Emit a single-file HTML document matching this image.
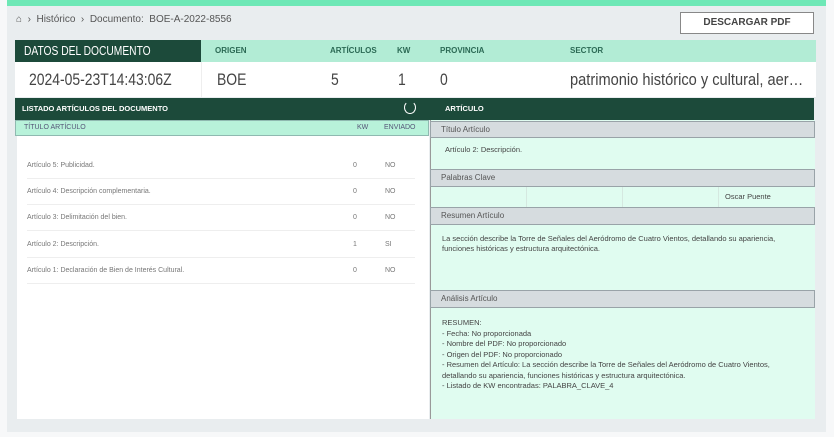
<!DOCTYPE html>
<html><head><meta charset="utf-8"><style>
*{box-sizing:border-box;margin:0;padding:0}
body{width:834px;height:437px;background:#f7f8f9;font-family:"Liberation Sans",sans-serif;position:relative;overflow:hidden;color:#555}
.a{position:absolute;white-space:nowrap}
.panel{left:7px;top:0;width:819px;height:432px;background:#e9edef}
.bar{left:7px;top:0;width:819px;height:6px;background:#6ee8b6}
.crumb{left:16px;top:14px;font-size:10px;color:#555}
.btn{left:680px;top:12px;width:134px;height:22px;background:#fff;border:1px solid #888;font-size:10px;color:#444;text-align:center;line-height:20px;font-weight:bold}
.hd{top:40px;height:22px;font-size:8px;font-weight:bold;color:#2c6a55;line-height:22px}
.dt{top:62px;height:35px;font-size:17px;color:#444;line-height:35px;transform:scaleX(0.82);transform-origin:0 50%}
.dark{background:#1c4a3a;color:#fff}
.gh{background:#d6dcdf;border:1px solid #99a3a8;font-size:8px;color:#555;line-height:15px;padding-left:10px}
.row{left:27px;width:388px;font-size:7px;color:#777;border-bottom:1px solid #eee;height:26px;line-height:26px}
.row span{position:absolute}
.txt{font-size:7.5px;color:#444;line-height:9.5px;white-space:normal}
</style></head><body>
<div class="a panel"></div>
<div class="a bar"></div>
<div class="a crumb">⌂ &nbsp;›&nbsp; Histórico &nbsp;›&nbsp; Documento:&nbsp; BOE-A-2022-8556</div>
<div class="a btn">DESCARGAR PDF</div>

<div class="a" style="left:15px;top:40px;width:801px;height:22px;background:#b2ecd5"></div>
<div class="a dark" style="left:15px;top:40px;width:186px;height:22px"></div>
<div class="a" style="left:24px;top:40px;line-height:22px;font-size:12.5px;color:#fff;transform:scaleX(0.82);transform-origin:0 50%">DATOS DEL DOCUMENTO</div>
<div class="a hd" style="left:215px">ORIGEN</div>
<div class="a hd" style="left:330px">ARTÍCULOS</div>
<div class="a hd" style="left:397px">KW</div>
<div class="a hd" style="left:440px">PROVINCIA</div>
<div class="a hd" style="left:570px">SECTOR</div>
<div class="a" style="left:15px;top:62px;width:801px;height:35px;background:#fff"></div>
<div class="a" style="left:201px;top:62px;width:1px;height:35px;background:#eee"></div>
<div class="a dt" style="left:29px">2024-05-23T14:43:06Z</div>
<div class="a dt" style="left:217px">BOE</div>
<div class="a dt" style="left:331px">5</div>
<div class="a dt" style="left:398px">1</div>
<div class="a dt" style="left:440px">0</div>
<div class="a dt" style="left:570px;transform:scaleX(0.86)">patrimonio histórico y cultural, aer…</div>

<div class="a dark" style="left:15px;top:98px;width:799px;height:22px"></div>
<div class="a" style="left:22px;top:98px;font-size:7.5px;font-weight:bold;color:#fff;line-height:22px">LISTADO ARTÍCULOS DEL DOCUMENTO</div>
<div class="a" style="left:404px;top:101px;width:12px;height:13px;border:1.5px solid #fff;border-radius:50%;border-top-color:transparent"></div>
<div class="a" style="left:445px;top:98px;font-size:7.5px;font-weight:bold;color:#fff;line-height:22px">ARTÍCULO</div>

<div class="a" style="left:17px;top:120px;width:412px;height:299px;background:#fff"></div>
<div class="a" style="left:15px;top:120px;width:414px;height:16px;background:#b8f2da;border:1px solid #8fb9b0;font-size:7px;color:#557;line-height:14px;padding-left:8px">TÍTULO ARTÍCULO<span style="position:absolute;left:341px">KW</span><span style="position:absolute;left:368px">ENVIADO</span></div>
<div class="a row" style="top:153px"><span>Artículo 5: Publicidad.</span><span style="left:326px">0</span><span style="left:358px">NO</span></div>
<div class="a row" style="top:179px"><span>Artículo 4: Descripción complementaria.</span><span style="left:326px">0</span><span style="left:358px">NO</span></div>
<div class="a row" style="top:205px"><span>Artículo 3: Delimitación del bien.</span><span style="left:326px">0</span><span style="left:358px">NO</span></div>
<div class="a row" style="top:232px"><span>Artículo 2: Descripción.</span><span style="left:326px">1</span><span style="left:358px">SI</span></div>
<div class="a row" style="top:258px"><span>Artículo 1: Declaración de Bien de Interés Cultural.</span><span style="left:326px">0</span><span style="left:358px">NO</span></div>

<div class="a" style="left:430px;top:120px;width:385px;height:299px;background:#e0fcf0;border-left:1px solid #999"></div>
<div class="a gh" style="left:430px;top:121px;width:385px;height:17px">Título Artículo</div>
<div class="a txt" style="left:445px;top:145px">Artículo 2: Descripción.</div>
<div class="a gh" style="left:430px;top:169px;width:385px;height:18px">Palabras Clave</div>
<div class="a" style="left:526px;top:187px;width:1px;height:20px;background:#d5e8e0"></div>
<div class="a" style="left:622px;top:187px;width:1px;height:20px;background:#d5e8e0"></div>
<div class="a" style="left:718px;top:187px;width:1px;height:20px;background:#d5e8e0"></div>
<div class="a txt" style="left:725px;top:192px">Oscar Puente</div>
<div class="a gh" style="left:430px;top:207px;width:385px;height:18px">Resumen Artículo</div>
<div class="a txt" style="left:442px;top:234px;width:345px">La sección describe la Torre de Señales del Aeródromo de Cuatro Vientos, detallando su apariencia, funciones históricas y estructura arquitectónica.</div>
<div class="a gh" style="left:430px;top:290px;width:385px;height:18px">Análisis Artículo</div>
<div class="a txt" style="left:442px;top:318px;width:350px;line-height:10.5px">RESUMEN:<br>- Fecha: No proporcionada<br>- Nombre del PDF: No proporcionado<br>- Origen del PDF: No proporcionado<br>- Resumen del Artículo: La sección describe la Torre de Señales del Aeródromo de Cuatro Vientos, detallando su apariencia, funciones históricas y estructura arquitectónica.<br>- Listado de KW encontradas: PALABRA_CLAVE_4</div>
</body></html>
